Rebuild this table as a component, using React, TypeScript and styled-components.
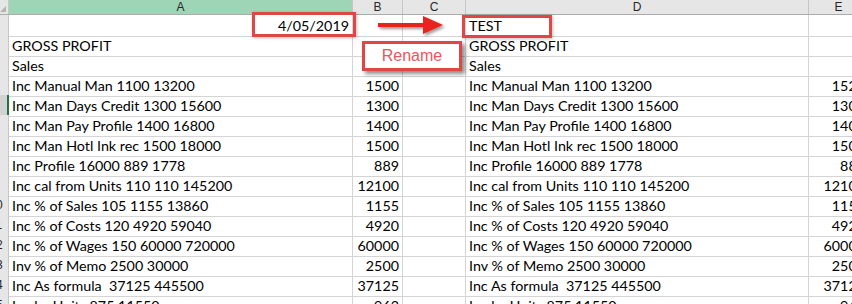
import styled, { createGlobalStyle } from 'styled-components';

const GlobalStyle = createGlobalStyle`
  html, body {
    margin: 0;
    padding: 0;
    background: #ffffff;
    overflow: hidden;
  }
`;

const COLS = '9px 344px 50px 63px 343px 60px';

const Sheet = styled.div`
  position: relative;
  width: 852px;
  height: 304px;
  overflow: hidden;
  background: #ffffff;
  font-family: Lato, 'Liberation Sans', sans-serif;
`;

const HeaderRow = styled.div`
  display: grid;
  grid-template-columns: ${COLS};
  height: 15px;
  box-sizing: border-box;
  border-bottom: 1px solid #ababab;
  background: #e6e6e6;
`;

const Corner = styled.div`
  position: relative;
  box-sizing: border-box;
  border-right: 1px solid #c6c6c6;
  &::after {
    content: '';
    position: absolute;
    right: 2px;
    bottom: 2px;
    border-left: 6px solid transparent;
    border-bottom: 6px solid #b4b4b4;
  }
`;

const ColHead = styled.div<{ $selected?: boolean }>`
  box-sizing: border-box;
  border-right: 1px solid #c6c6c6;
  background: ${(p) => (p.$selected ? '#9fd5b7' : '#e6e6e6')};
  color: #262626;
  font-family: 'Liberation Sans', sans-serif;
  font-size: 12px;
  line-height: 14px;
  text-align: center;
`;

const Row = styled.div`
  display: grid;
  grid-template-columns: ${COLS};
  height: 20px;
`;

// the row-number column is scrolled mostly out of view: only its right edge shows
const RowHead = styled.div<{ $active?: boolean }>`
  box-sizing: border-box;
  overflow: hidden;
  background: ${(p) => (p.$active ? '#d2d2d2' : '#e6e6e6')};
  border-bottom: 1px solid #c6c6c6;
  border-right: ${(p) => (p.$active ? '2px solid #217346' : '1px solid #c6c6c6')};
`;

const RowNum = styled.span`
  display: block;
  width: 26px;
  margin-left: -17px;
  text-align: center;
  font-family: 'Liberation Sans', sans-serif;
  font-size: 12px;
  line-height: 20px;
  color: #262626;
`;

const Cell = styled.div<{ $num?: boolean }>`
  box-sizing: border-box;
  border-right: 1px solid #d4d4d4;
  border-bottom: 1px solid #d4d4d4;
  padding: 0 3px;
  font-size: 14.3px;
  line-height: 21px;
  color: #000000;
  white-space: nowrap;
  overflow: ${(p) => (p.$num ? 'hidden' : 'visible')};
  text-align: ${(p) => (p.$num ? 'right' : 'left')};
  position: relative;
  z-index: ${(p) => (p.$num ? 0 : 1)};
`;

const Frame = styled.div`
  position: absolute;
  box-sizing: border-box;
  border: 3px solid #e04646;
  box-shadow: 1px 1px 3px rgba(0, 0, 0, 0.25);
  z-index: 5;
`;

const DateFrame = styled(Frame)`
  left: 252px;
  top: 12px;
  width: 104px;
  height: 25px;
`;

const TestFrame = styled(Frame)`
  left: 462px;
  top: 15px;
  width: 90px;
  height: 23px;
`;

const RenameBox = styled.div`
  position: absolute;
  left: 362px;
  top: 41px;
  width: 100px;
  height: 30px;
  box-sizing: border-box;
  border: 3px solid #e04646;
  background: #ffffff;
  box-shadow: 3px 3px 4px rgba(0, 0, 0, 0.45);
  display: flex;
  align-items: center;
  justify-content: center;
  color: #ea5560;
  font-family: 'Liberation Sans', Arial, sans-serif;
  font-size: 16px;
  z-index: 6;
`;

const Arrow = styled.svg`
  position: absolute;
  left: 374px;
  top: 12px;
  z-index: 6;
`;

type Line = { a: string; b: string; e: string; rh: string };

const lines: Line[] = [
  { a: 'GROSS PROFIT', b: '', e: '', rh: '2' },
  { a: 'Sales', b: '', e: '', rh: '3' },
  { a: 'Inc Manual Man 1100 13200', b: '1500', e: '1520', rh: '4' },
  { a: 'Inc Man Days Credit 1300 15600', b: '1300', e: '1300', rh: '5' },
  { a: 'Inc Man Pay Profile 1400 16800', b: '1400', e: '1400', rh: '6' },
  { a: 'Inc Man Hotl Ink rec 1500 18000', b: '1500', e: '1500', rh: '7' },
  { a: 'Inc Profile 16000 889 1778', b: '889', e: '889', rh: '8' },
  { a: 'Inc cal from Units 110 110 145200', b: '12100', e: '12100', rh: '9' },
  { a: 'Inc % of Sales 105 1155 13860', b: '1155', e: '1155', rh: '10' },
  { a: 'Inc % of Costs 120 4920 59040', b: '4920', e: '4920', rh: '11' },
  { a: 'Inc % of Wages 150 60000 720000', b: '60000', e: '60000', rh: '12' },
  { a: 'Inv % of Memo 2500 30000', b: '2500', e: '2500', rh: '13' },
  { a: 'Inc As formula\u00a0 37125 445500', b: '37125', e: '37125', rh: '14' },
  { a: 'Inc by Units 875 11550', b: '962', e: '962', rh: '15' },
];

export default function App() {
  return (
    <>
      <GlobalStyle />
      <Sheet>
        <HeaderRow>
          <Corner />
          <ColHead $selected>A</ColHead>
          <ColHead>B</ColHead>
          <ColHead>C</ColHead>
          <ColHead>D</ColHead>
          <ColHead>E</ColHead>
        </HeaderRow>

        <Row>
          <RowHead>
            <RowNum>1</RowNum>
          </RowHead>
          <Cell $num>4/05/2019</Cell>
          <Cell />
          <Cell />
          <Cell>TEST</Cell>
          <Cell />
        </Row>

        {lines.map((l) => (
          <Row key={l.rh}>
            <RowHead $active={l.rh === '5'}>
              <RowNum>{l.rh}</RowNum>
            </RowHead>
            <Cell>{l.a}</Cell>
            <Cell $num>{l.b}</Cell>
            <Cell />
            <Cell>{l.a}</Cell>
            <Cell $num>{l.e}</Cell>
          </Row>
        ))}

        <DateFrame />
        <TestFrame />
        <Arrow width="74" height="28" viewBox="0 0 74 28">
          <defs>
            <filter id="sh" x="-20%" y="-40%" width="150%" height="200%">
              <feDropShadow dx="2" dy="2" stdDeviation="1.5" floodColor="#000" floodOpacity="0.4" />
            </filter>
          </defs>
          <g filter="url(#sh)">
            <rect x="4" y="11" width="46" height="4" fill="#e8201c" />
            <polygon points="49,4 69,13 49,22" fill="#e8201c" />
          </g>
        </Arrow>
        <RenameBox>Rename</RenameBox>
      </Sheet>
    </>
  );
}
